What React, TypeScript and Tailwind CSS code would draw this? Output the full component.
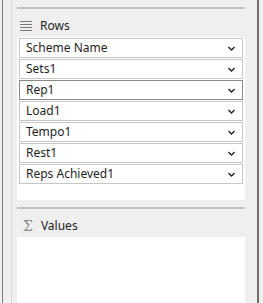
import React from 'react';

const rows = ['Scheme Name', 'Sets1', 'Rep1', 'Load1', 'Tempo1', 'Rest1', 'Reps Achieved1'];

const Chevron: React.FC = () => (
  <svg width="7" height="5" viewBox="0 0 7 5" className="shrink-0">
    <path d="M0.5 1 L3.5 4 L6.5 1" fill="none" stroke="#222" strokeWidth="1.4" />
  </svg>
);

const RowsIcon: React.FC = () => (
  <svg width="12" height="10" viewBox="0 0 12 10">
    <rect x="0" y="0" width="12" height="1" fill="#7a7a7a" />
    <rect x="0" y="3" width="12" height="1" fill="#7a7a7a" />
    <rect x="0" y="6" width="12" height="1" fill="#7a7a7a" />
    <rect x="0" y="9" width="12" height="1" fill="#7a7a7a" />
  </svg>
);

const App: React.FC = () => {
  return (
    <div
      className="w-[263px] h-[303px] bg-[#efefef] flex overflow-hidden text-[12px] text-[#1e1e1e]"
      style={{ fontFamily: '"Noto Sans", "Open Sans", sans-serif' }}
    >
      <div className="w-[2px]" />
      <div className="w-[1px] bg-[#7b7b7b]" />
      <div className="w-[14px] flex justify-center">
        <div className="w-[1px] ml-[3px] border-l border-dotted border-[#c4c4c4]" />
      </div>

      <div className="w-[228px] flex flex-col">
        <div className="h-[7px]" />
        <div className="h-[2px] bg-[#c3c3c3]" />

        <div className="h-[28px] flex items-center gap-[8px] pl-[3px] pt-[6px]">
          <RowsIcon />
          <span>Rows</span>
        </div>

        <div className="h-[163px] bg-white flex flex-col gap-[1px] px-[2px] pt-[1px]">
          {rows.map((r) => (
            <div
              key={r}
              className={`h-[20px] flex items-center justify-between pl-[6px] pr-[7px] border ${
                r === 'Rep1' ? 'border-[#8a8a8a]' : 'border-[#c6c6c6]'
              }`}
            >
              <span className="leading-none">{r}</span>
              <Chevron />
            </div>
          ))}
        </div>

        <div className="h-[7px]" />
        <div className="h-[2px] bg-[#c3c3c3]" />

        <div className="h-[28px] flex items-center gap-[8px] pl-[6px] pt-[6px]">
          <span className="text-[#8a8a8a] text-[14px]" style={{ fontFamily: '"DejaVu Serif", serif' }}>Σ</span>
          <span>Values</span>
        </div>

        <div className="flex-1 bg-white" />
      </div>

      <div className="w-[12px]" />
      <div className="w-[2px] bg-[#6e6e6e]" />
      <div className="flex-1" />
    </div>
  );
};

export default App;
